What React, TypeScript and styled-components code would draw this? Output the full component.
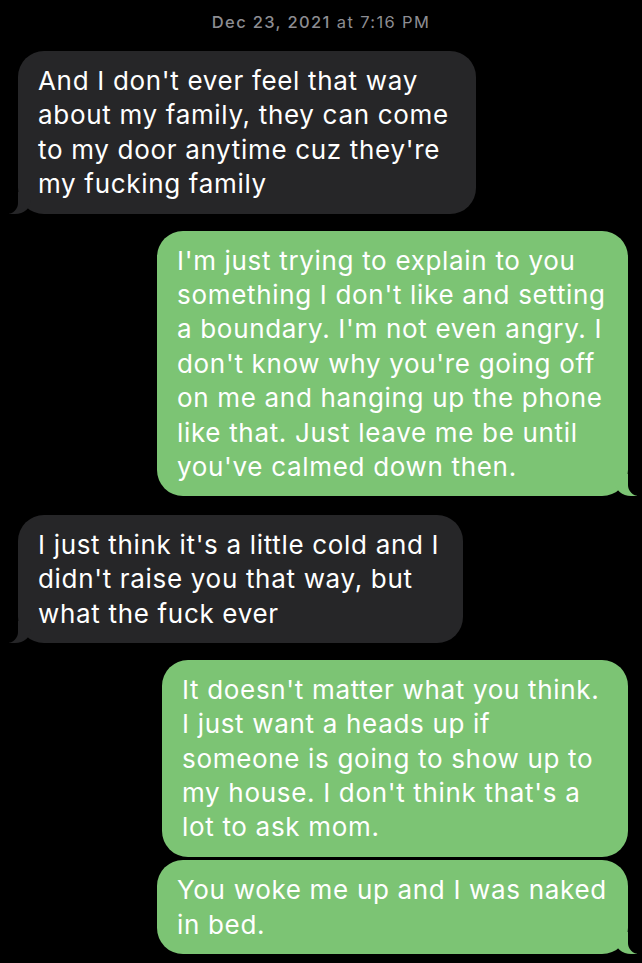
import React from "react";
import styled, { createGlobalStyle } from "styled-components";

const GlobalStyle = createGlobalStyle`
  html, body {
    margin: 0;
    padding: 0;
    background: #000;
  }
  * { box-sizing: border-box; }
`;

const Screen = styled.div`
  width: 642px;
  height: 963px;
  overflow: hidden;
  background: #000;
  display: flex;
  flex-direction: column;
  font-family: Inter, "Liberation Sans", sans-serif;
  -webkit-font-smoothing: antialiased;
`;

const Stamp = styled.div`
  margin-top: 12px;
  height: 20px;
  line-height: 20px;
  text-align: center;
  font-size: 16.5px;
  color: #8d8d92;
  letter-spacing: 1.35px;
`;

const StampDate = styled.span`
  font-weight: 500;
`;

const Row = styled.div<{ $me?: boolean; $gap: number }>`
  display: flex;
  justify-content: ${(p) => (p.$me ? "flex-end" : "flex-start")};
  padding: ${(p) => (p.$me ? "0 14px 0 0" : "0 0 0 18px")};
  margin-top: ${(p) => p.$gap}px;
`;

const Bubble = styled.div<{ $me?: boolean; $w: number; $tail?: boolean }>`
  position: relative;
  width: ${(p) => p.$w}px;
  padding: 13px 8px 12px 20px;
  border-radius: 26px;
  background: ${(p) => (p.$me ? "#7cc474" : "#262628")};
  color: #ffffff;
  font-size: 26px;
  line-height: 34.4px;
  letter-spacing: 0.68px;
  white-space: nowrap;

  &::before,
  &::after {
    content: "";
    position: absolute;
    bottom: 0;
    display: ${(p) => (p.$tail ? "block" : "none")};
  }

  &::before {
    width: 22px;
    height: 22px;
    background: ${(p) => (p.$me ? "#7cc474" : "#262628")};
    ${(p) =>
      p.$me
        ? "right: -9px; border-bottom-left-radius: 16px 14px;"
        : "left: -9px; border-bottom-right-radius: 16px 14px;"}
  }

  &::after {
    width: 11px;
    height: 24px;
    background: #000;
    ${(p) =>
      p.$me
        ? "right: -11px; border-bottom-left-radius: 11px;"
        : "left: -11px; border-bottom-right-radius: 11px;"}
  }
`;

export default function App() {
  return (
    <Screen>
      <GlobalStyle />
      <Stamp>
        <StampDate>Dec 23, 2021</StampDate> at 7:16 PM
      </Stamp>

      <Row $gap={19}>
        <Bubble $w={458} $tail>
          And I don't ever feel that way
          <br />
          about my family, they can come
          <br />
          to my door anytime cuz they're
          <br />
          my fucking family
        </Bubble>
      </Row>

      <Row $me $gap={17}>
        <Bubble $me $w={471} $tail>
          I'm just trying to explain to you
          <br />
          something I don't like and setting
          <br />
          a boundary. I'm not even angry. I
          <br />
          don't know why you're going off
          <br />
          on me and hanging up the phone
          <br />
          like that. Just leave me be until
          <br />
          you've calmed down then.
        </Bubble>
      </Row>

      <Row $gap={18.5}>
        <Bubble $w={445} $tail>
          I just think it's a little cold and I
          <br />
          didn't raise you that way, but
          <br />
          what the fuck ever
        </Bubble>
      </Row>

      <Row $me $gap={16.5}>
        <Bubble $me $w={466}>
          It doesn't matter what you think.
          <br />
          I just want a heads up if
          <br />
          someone is going to show up to
          <br />
          my house. I don't think that's a
          <br />
          lot to ask mom.
        </Bubble>
      </Row>

      <Row $me $gap={3.5}>
        <Bubble $me $w={471} $tail>
          You woke me up and I was naked
          <br />
          in bed.
        </Bubble>
      </Row>
    </Screen>
  );
}
